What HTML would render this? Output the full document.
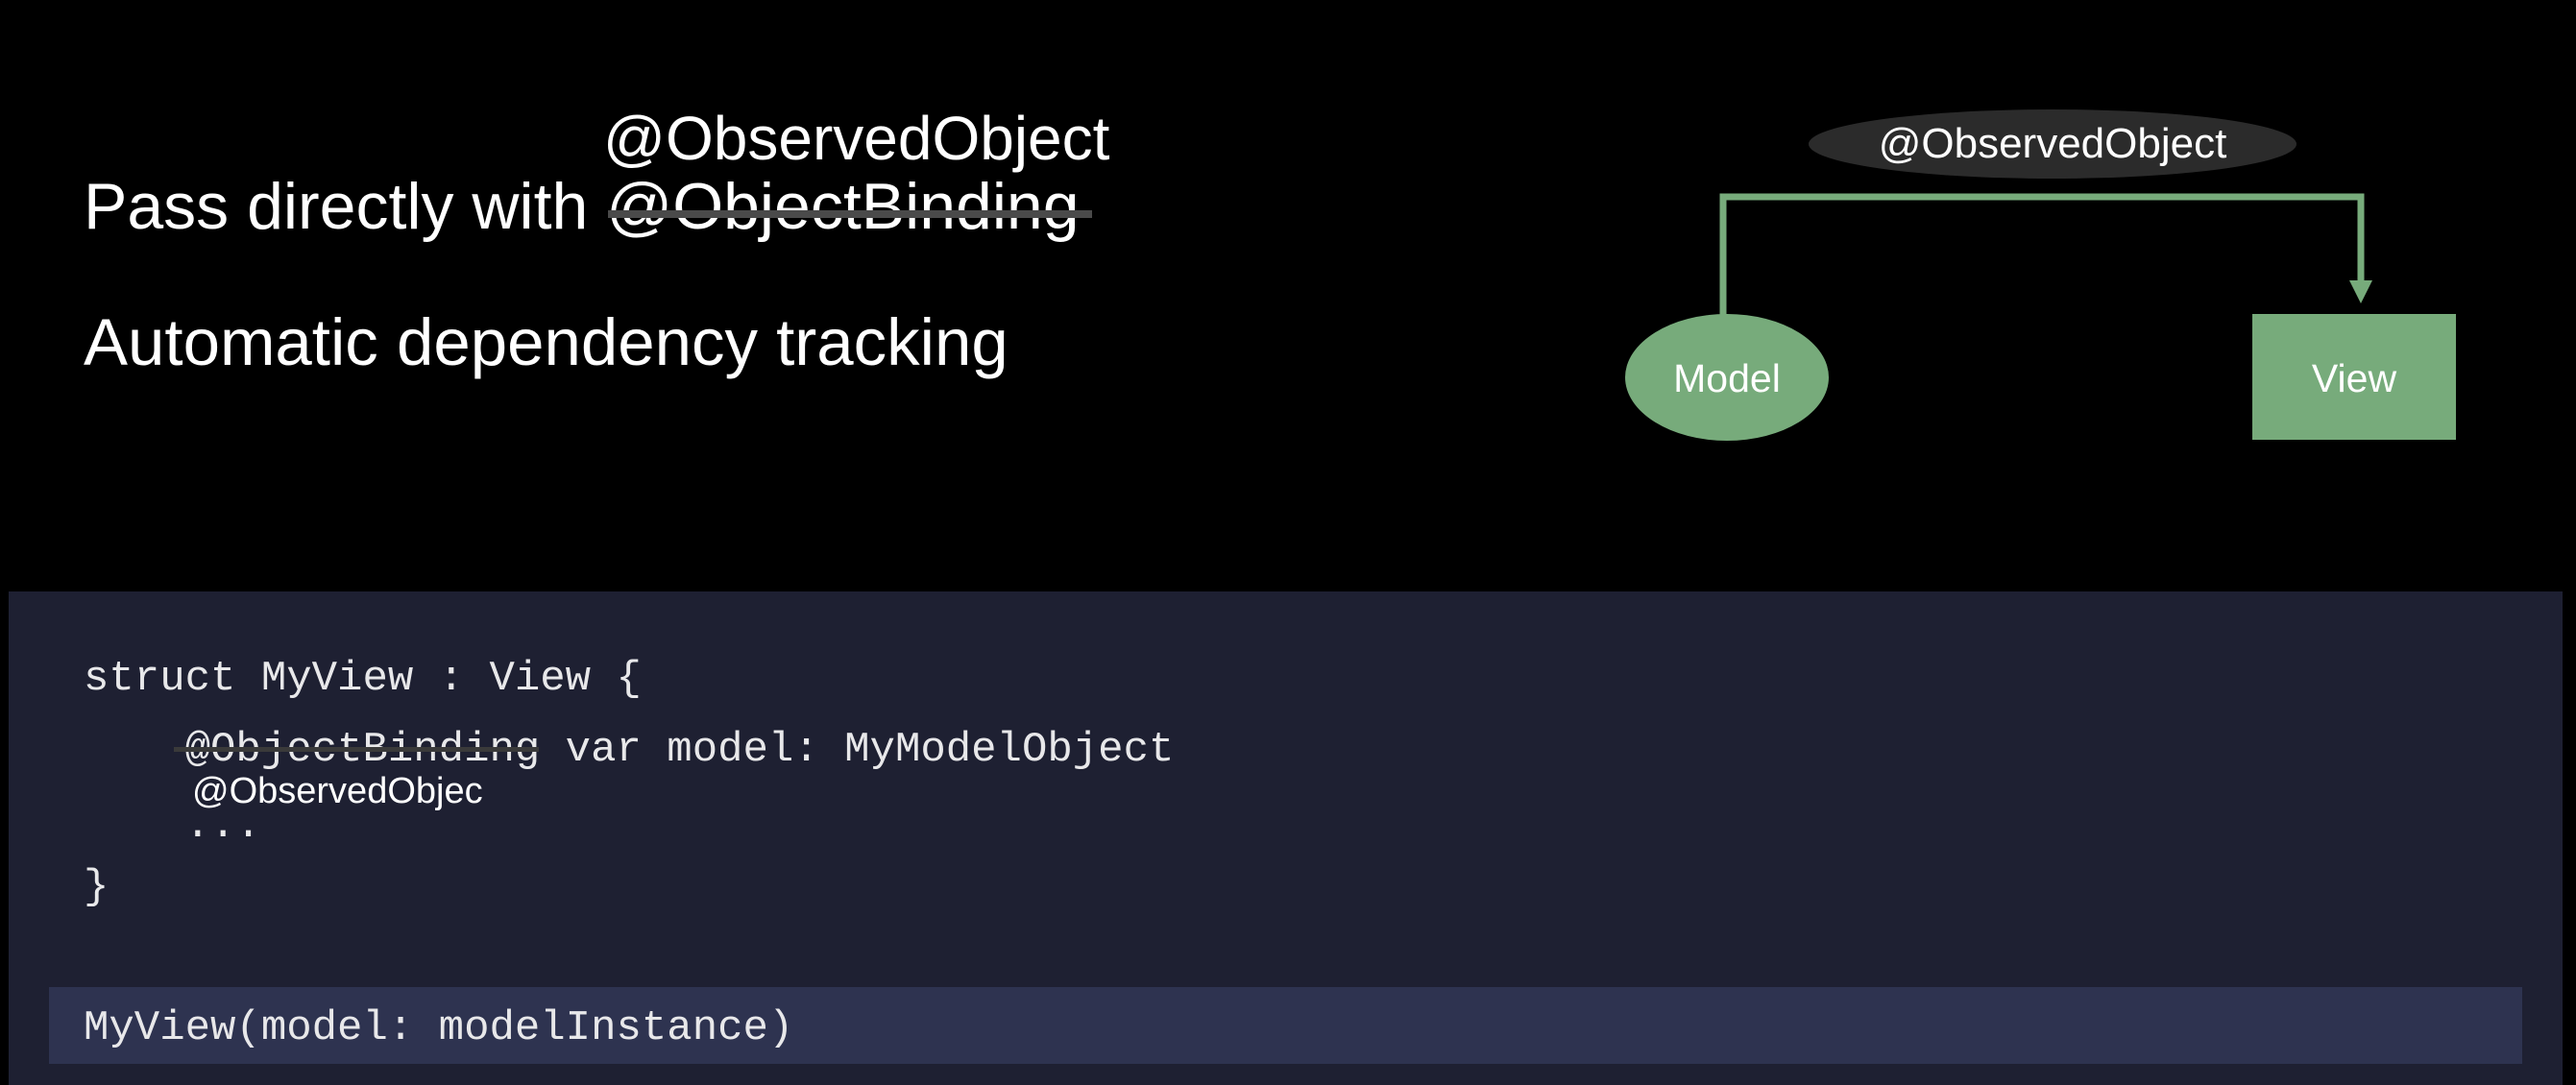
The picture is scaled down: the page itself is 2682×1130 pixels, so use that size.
<!DOCTYPE html>
<html><head><style>
body{margin:0;width:2682px;height:1130px;background:#000;position:relative;overflow:hidden;font-family:"Liberation Sans",sans-serif;color:#fff}
.a{position:absolute;white-space:nowrap;line-height:1}
.m{font-family:"Liberation Mono",monospace;font-size:44px;color:#e8e8ea}
</style></head><body>
<div class="a" style="left:628px;top:112px;font-size:64px">@ObservedObject</div>
<div class="a" style="left:87px;top:181px;font-size:68px">Pass directly with @ObjectBinding</div>
<div class="a" style="left:633px;top:219px;width:504px;height:8px;background:#4a4a4a"></div>
<div class="a" style="left:87px;top:322px;font-size:69px">Automatic dependency tracking</div>

<svg class="a" style="left:0;top:0" width="2682" height="600">
<ellipse cx="2137" cy="150" rx="254" ry="36" fill="#2b2b2b"/>
<polyline points="1794,330 1794,205 2458,205 2458,296" fill="none" stroke="#77ab7b" stroke-width="7"/>
<polygon points="2446,292 2470,292 2458,316" fill="#77ab7b"/>
<ellipse cx="1798" cy="393" rx="106" ry="66" fill="#77ab7b"/>
<rect x="2345" y="327" width="212" height="131" fill="#77ab7b"/>
</svg>
<div class="a" style="left:1883px;width:508px;text-align:center;top:128px;font-size:44px">@ObservedObject</div>
<div class="a" style="left:1692px;width:212px;text-align:center;top:374px;font-size:41px">Model</div>
<div class="a" style="left:2345px;width:212px;text-align:center;top:374px;font-size:41px">View</div>

<div class="a" style="left:9px;top:616px;width:2659px;height:514px;background:#1e2032"></div>
<div class="a m" style="left:87px;top:685px">struct MyView : View {</div>
<div class="a m" style="left:87px;top:759px;white-space:pre">    @ObjectBinding var model: MyModelObject</div>
<div class="a" style="left:181px;top:778px;width:380px;height:5px;background:#3a3a3a"></div>
<div class="a" style="left:200px;top:805px;font-size:38px">@ObservedObjec</div>
<div class="a m" style="left:87px;top:838px;white-space:pre">    ...</div>
<div class="a m" style="left:87px;top:902px">}</div>
<div class="a" style="left:51px;top:1028px;width:2575px;height:80px;background:#2e3350"></div>
<div class="a m" style="left:87px;top:1049px">MyView(model: modelInstance)</div>
</body></html>
